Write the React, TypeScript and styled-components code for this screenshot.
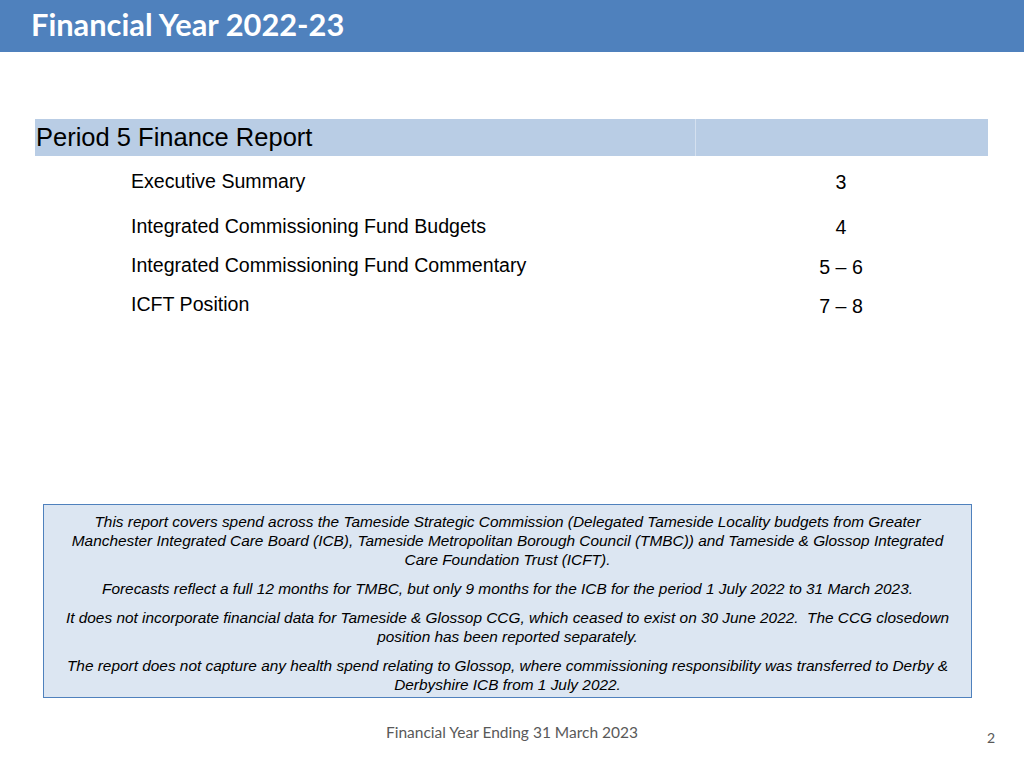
import React from "react";
import styled, { createGlobalStyle } from "styled-components";

const Global = createGlobalStyle`
  html, body { margin: 0; padding: 0; background: #fff; }
  body { width: 1024px; height: 768px; overflow: hidden; font-family: "Liberation Sans", Arial, sans-serif; }
`;

const Page = styled.div`
  width: 1024px; height: 768px; display: flex; flex-direction: column; position: relative;
`;
const Header = styled.div`
  height: 52px; background: #4f81bd; display: flex; align-items: center; padding-left: 31px;
  box-sizing: border-box;
`;
const Title = styled.h1`
  margin: 0 0 4px; color: #fff; font-family: Lato, "Open Sans", sans-serif; font-weight: 700; font-size: 30.8px;
`;
const Table = styled.div`
  margin: 67px 36px 0 35px; display: flex; flex-direction: column;
`;
const HeadRow = styled.div`
  display: grid; grid-template-columns: 660px 1fr; height: 37px; background: #b9cde5;
`;
const HeadCell = styled.div`
  font-size: 25.5px; color: #000; display: flex; align-items: center; padding-left: 1px;
  & + & { border-left: 1px solid #d4e0ef; }
`;
const Row = styled.div<{ h: number }>`
  display: grid; grid-template-columns: 637px 146px; height: ${p => p.h}px; align-items: center;
  font-size: 19.6px; color: #000; padding-left: 96px;
`;
const Num = styled.div`
  text-align: center; padding-top: 3px;
`;
const Note = styled.div`
  margin: 180px 0 0 43px; width: 929px; height: 194px; box-sizing: border-box;
  background: #dce6f2; border: 1.5px solid #4f81bd; padding: 7px 12px 0;
  display: flex; flex-direction: column; gap: 10px;
`;
const Para = styled.p`
  margin: 0; font-style: italic; font-size: 15.4px; line-height: 19px; text-align: center; color: #000;
`;
const Footer = styled.div`
  margin-top: 25px; text-align: center; font-family: Lato, "Open Sans", sans-serif; font-size: 15.5px; color: #595959;
`;
const PageNum = styled.div`
  position: absolute; right: 29px; bottom: 22px; font-family: Lato, sans-serif; font-size: 14px; color: #595959;
`;

const rows: [string, string, number][] = [
  ["Executive Summary", "3", 50],
  ["Integrated Commissioning Fund Budgets", "4", 40],
  ["Integrated Commissioning Fund Commentary", "5 – 6", 39],
  ["ICFT Position", "7 – 8", 39],
];

export default function App() {
  return (
    <Page>
      <Global />
      <Header><Title>Financial Year 2022-23</Title></Header>
      <Table>
        <HeadRow><HeadCell>Period 5 Finance Report</HeadCell><HeadCell /></HeadRow>
        {rows.map(([t, n, h]) => (
          <Row key={t} h={h}><div>{t}</div><Num>{n}</Num></Row>
        ))}
      </Table>
      <Note>
        <Para>This report covers spend across the Tameside Strategic Commission (Delegated Tameside Locality budgets from Greater Manchester Integrated Care Board (ICB), Tameside Metropolitan Borough Council (TMBC)) and Tameside &amp; Glossop Integrated Care Foundation Trust (ICFT).</Para>
        <Para>Forecasts reflect a full 12 months for TMBC, but only 9 months for the ICB for the period 1 July 2022 to 31 March 2023.</Para>
        <Para>It does not incorporate financial data for Tameside &amp; Glossop CCG, which ceased to exist on 30 June 2022.&nbsp; The CCG closedown position has been reported separately.</Para>
        <Para>The report does not capture any health spend relating to Glossop, where commissioning responsibility was transferred to Derby &amp; Derbyshire ICB from 1 July 2022.</Para>
      </Note>
      <Footer>Financial Year Ending 31 March 2023</Footer>
      <PageNum>2</PageNum>
    </Page>
  );
}
